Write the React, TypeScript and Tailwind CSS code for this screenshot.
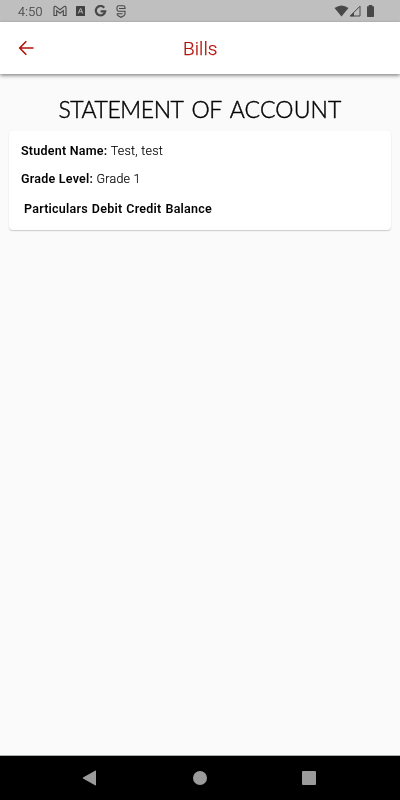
import React from "react";

function StatusBar() {
  return (
    <div className="flex h-[22px] shrink-0 items-center bg-[#bfbfbf] pl-[18px] pr-[26px] text-[#484848]">
      <span className="w-[26px] whitespace-nowrap pt-px text-[12.5px] font-light leading-[21px] tracking-[0.3px] opacity-[0.99] will-change-transform [-webkit-text-stroke:0.2px_#484848]">4:50</span>
      <svg className="ml-[9px]" width="14" height="12" viewBox="0 0 14 12" fill="none" stroke="currentColor" strokeWidth="1.1">
        <path d="M1 10.500V2.200Q1.600.8 3 1.600L7 4.800l4-3.200q1.400-.8 2 .6v8.300h-2.700V5.600L7 8.200 3.700 5.600v4.900z" />
      </svg>
      <svg className="ml-[9px]" width="9" height="10" viewBox="0 0 9 10">
        <rect width="9" height="10" rx="0.600" fill="#424242" />
        <path d="M2.300 7.500L4.300 2.700h.7l1.700 4.800M3.200 5.800h2.800" fill="none" stroke="#bfbfbf" strokeWidth="0.900" />
      </svg>
      <svg className="ml-[9px]" width="13" height="12" viewBox="0 0 13 12" fill="none" stroke="currentColor" strokeWidth="2.200">
        <path d="M10.200 2.700A4.700 4.700 0 1 0 11.200 6.300H6.600" />
      </svg>
      <svg className="ml-[9px]" width="10" height="13" viewBox="0 0 10 13" fill="none" stroke="currentColor" strokeWidth="1.100">
        <path d="M9 4V2.600Q9 .8 7.200.8H2.800Q1 .8 1 2.600v1.800Q1 6.200 2.800 6.200H9v2.600Q9 10 7.800 10.800L5 12.300 2.200 10.800Q1 10 1 8.800" />
        <path d="M3 3.500h6M1 8.800h5.500" />
      </svg>
      <div className="ml-auto flex items-center">
        <svg width="15" height="12" viewBox="0 0 15 12" fill="currentColor">
          <path d="M.5 3Q7.500-2 14.500 3L7.500 11.500z" />
        </svg>
        <svg width="12" height="12" viewBox="0 0 12 12">
          <path d="M1.200 11L11 1.200V11z" fill="none" stroke="#484848" />
          <path d="M1 11.200L5 7.200v4z" fill="#484848" />
        </svg>
        <svg className="ml-[6px]" width="7" height="12" viewBox="0 0 8 12" preserveAspectRatio="none" fill="currentColor">
          <path d="M2 0h4v1.200h1.300q.7 0 .7.700v9.400q0 .7-.7.700H.7q-.7 0-.7-.7V1.900q0-.7.7-.7H2z" />
        </svg>
      </div>
    </div>
  );
}

function AppBar() {
  return (
    <header className="relative grid h-[52px] shrink-0 grid-cols-[1fr_auto_1fr] items-center bg-white text-[#b31208] shadow-[0_2px_4px_rgba(0,0,0,0.28),0_1px_3px_rgba(0,0,0,0.25)]">
      <svg className="ml-[18px]" width="16" height="16" viewBox="0 0 16 16" fill="none" stroke="currentColor" strokeWidth="1.600">
        <path d="M15.500 8H2M8.300 1.200L1.700 8l6.600 6.800" />
      </svg>
      <h1 className="pt-px text-[19px] font-light leading-[24px] tracking-[0.1px] opacity-[0.99] will-change-transform [-webkit-text-stroke:0.25px_#b31208]">Bills</h1>
      <span />
    </header>
  );
}

function NavigationBar() {
  return (
    <nav className="flex h-[45px] shrink-0 items-center justify-between border-t border-[#a9afad] bg-black pl-[82px] pr-[84px] text-[#9b9b9b]">
      <svg width="15" height="16" viewBox="0 0 15 16" fill="currentColor">
        <path d="M13.500.5q.5-.2.500.4v14.200q0 .6-.5.400L1 8.500Q.4 8 1 7.500z" />
      </svg>
      <span className="size-[14px] rounded-full bg-[#9b9b9b]" />
      <span className="size-[14px] rounded-[1px] bg-[#9b9b9b]" />
    </nav>
  );
}

export default function App() {
  return (
    <div className="flex h-[800px] w-[400px] flex-col overflow-hidden bg-[#fafafa] font-['Roboto',sans-serif] text-black">
      <StatusBar />
      <AppBar />
      <main className="flex-1 px-[9px] pt-[19px]">
        <h2 className="flex h-[32px] items-center justify-center gap-[8px] whitespace-nowrap font-['Lato',sans-serif] text-[23px] font-light leading-[32px] opacity-[0.99] will-change-transform [-webkit-text-stroke:0.45px_black]">
          <span className="tracking-[-0.45px]">STATEMENT</span>
          <span className="tracking-[-0.5px]">OF</span>
          <span className="tracking-[0.15px]">ACCOUNT</span>
        </h2>
        <section className="mt-[6px] h-[99px] rounded-[4px] bg-white px-[11.500px] pt-[12px] text-[12.500px] leading-[16px] tracking-[0.23px] shadow-[0_1px_1px_rgba(0,0,0,0.13),0_1px_2px_rgba(0,0,0,0.08)]">
          <div className="opacity-[0.99] will-change-transform">
            <p><b className="font-semibold">Student Name:</b> <span className="font-light [-webkit-text-stroke:0.15px_black]">Test, test</span></p>
            <p className="mt-[12px]"><b className="font-semibold">Grade Level:</b> <span className="font-light [-webkit-text-stroke:0.15px_black]">Grade 1</span></p>
            <div className="mt-[14px] flex gap-[4px] pl-[3px] font-semibold">
              <span>Particulars</span>
              <span>Debit</span>
              <span>Credit</span>
              <span>Balance</span>
            </div>
          </div>
        </section>
      </main>
      <NavigationBar />
    </div>
  );
}
